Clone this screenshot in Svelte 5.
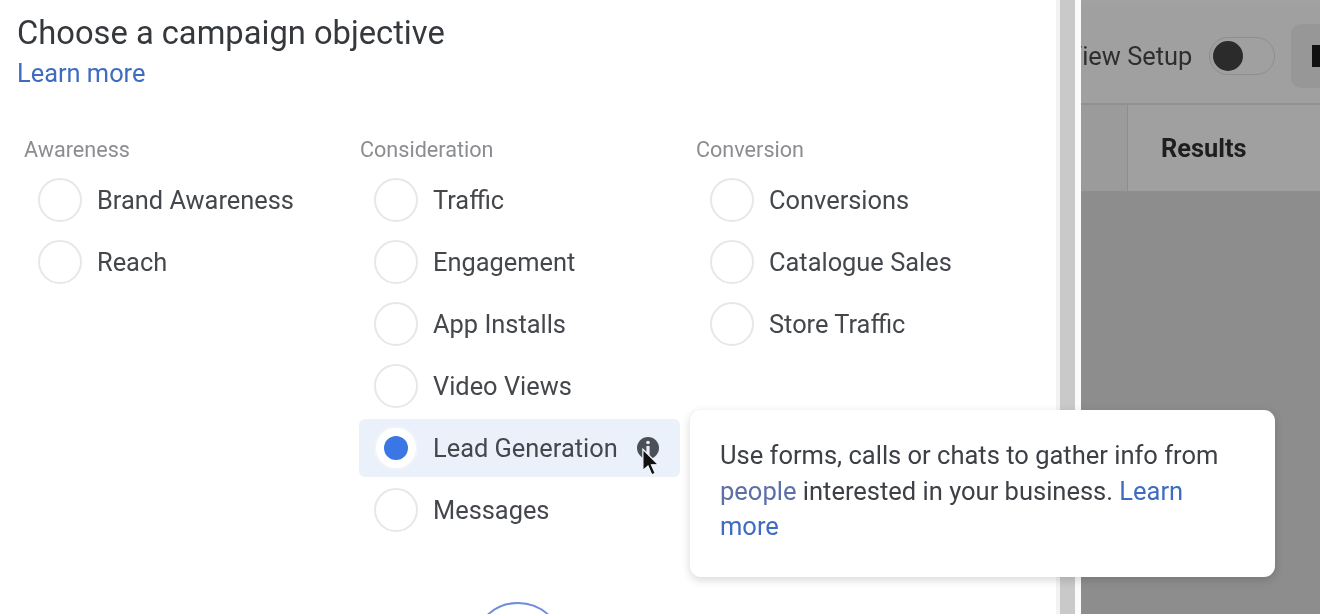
<script lang="ts">
  const columns = [
    { title: 'Awareness', items: ['Brand Awareness', 'Reach'] },
    { title: 'Consideration', items: ['Traffic', 'Engagement', 'App Installs', 'Video Views', 'Lead Generation', 'Messages'] },
    { title: 'Conversion', items: ['Conversions', 'Catalogue Sales', 'Store Traffic'] }
  ];
  const selected = 'Lead Generation';
</script>

<div class="page">
  <section class="modal">
    <h1>Choose a campaign objective</h1>
    <a class="link learn" href="#learn">Learn more</a>

    <div class="columns">
      {#each columns as col}
        <div class="column">
          <div class="col-title">{col.title}</div>
          {#each col.items as item}
            <div class="option" class:active={item === selected}>
              <span class="radio"></span>
              <span class="label">{item}</span>
              {#if item === selected}
                <svg class="info" viewBox="0 0 24 24" width="24" height="24">
                  <circle cx="12" cy="12" r="11" fill="#4b5058" />
                  <circle cx="12" cy="6.5" r="1.8" fill="#e8eef8" />
                  <rect x="10.4" y="10" width="3.2" height="9" fill="#e8eef8" />
                </svg>
              {/if}
            </div>
          {/each}
        </div>
      {/each}
    </div>

    <div class="spinner"></div>
  </section>

  <div class="gutter"></div>

  <section class="backdrop">
    <div class="toolbar">
      <span class="setup">View Setup</span>
      <span class="toggle"><span class="knob"></span></span>
      <span class="tool-btn"><span class="tool-mark"></span></span>
    </div>
    <div class="table-head">
      <div class="cell-a"></div>
      <div class="cell-b">Results</div>
    </div>
  </section>

  <div class="tooltip">
    Use forms, calls or chats to gather info from <a class="link soft" href="#people">people</a> interested in your business. <a class="link" href="#more">Learn more</a>
  </div>

  <svg class="cursor" viewBox="0 0 16 24" width="20" height="30">
    <path d="M1.5 1 L1.5 18 L5.6 14.4 L8.6 21.4 L11.4 20.2 L8.4 13.4 L13.8 13.2 Z" fill="#111" stroke="#f4f6fa" stroke-width="1" />
  </svg>
</div>

<style>
  :global(body) {
    margin: 0;
    background: #fff;
  }

  .page {
    position: relative;
    display: flex;
    width: 1320px;
    height: 614px;
    overflow: hidden;
    font-family: Roboto, 'Liberation Sans', sans-serif;
    color: #3d4045;
    filter: blur(0.4px);
  }

  .modal {
    width: 1056px;
    flex: none;
    box-sizing: border-box;
    padding: 13px 0 0 17px;
    background: #fff;
  }

  h1 {
    margin: 0;
    font-size: 32.7px;
    line-height: 41px;
    font-weight: 400;
    color: #35383c;
  }

  .link {
    color: #3f6cc0;
    text-decoration: none;
  }

  .soft {
    color: #5c6fa8;
  }

  .learn {
    display: block;
    font-size: 25.4px;
    line-height: 38px;
  }

  .columns {
    display: flex;
    margin: 44px 0 0 -1px;
  }

  .column {
    width: 336px;
    flex: none;
  }

  .col-title {
    padding-left: 8px;
    margin-bottom: 7px;
    font-size: 21.6px;
    line-height: 28px;
    color: #8b8d90;
  }

  .option {
    display: flex;
    align-items: center;
    width: 321px;
    height: 58px;
    margin: 0 0 4px 7px;
    box-sizing: border-box;
    padding-left: 15px;
    border-radius: 6px;
  }

  .option.active {
    background: #ebf1fb;
  }

  .radio {
    position: relative;
    width: 40px;
    height: 40px;
    flex: none;
    border: 2px solid #e6e7e9;
    border-radius: 50%;
    background: #fff;
  }

  .active .radio {
    border-color: #f1f4f9;
  }

  .active .radio::after {
    content: '';
    position: absolute;
    inset: 8px;
    border-radius: 50%;
    background: #3a76e4;
  }

  .label {
    margin-left: 15px;
    font-size: 25.4px;
    color: #44474c;
  }

  .info {
    margin-left: 18px;
  }

  .spinner {
    width: 88px;
    height: 88px;
    margin: 59px 0 0 455px;
    border: 2px solid #6f8fdc;
    border-radius: 50%;
  }

  .gutter {
    width: 25px;
    flex: none;
    box-sizing: border-box;
    background: #c9c9c9;
    border-left: 4px solid #f3f3f3;
    border-right: 6px solid #fbfbfb;
  }

  .backdrop {
    flex: 1;
    display: flex;
    flex-direction: column;
    min-width: 0;
    overflow: hidden;
    background: #8d8d8d;
  }

  .toolbar {
    display: flex;
    align-items: center;
    height: 105px;
    box-sizing: border-box;
    padding: 4px 0 0 0;
    border-top: 5px solid #a2a2a2;
    border-bottom: 2px solid #909090;
    background: #a0a0a0;
    white-space: nowrap;
  }

  .setup {
    margin-left: -15px;
    font-size: 25.4px;
    color: #2e2e2e;
  }

  .toggle {
    display: flex;
    align-items: center;
    width: 66px;
    height: 38px;
    margin-left: 17px;
    flex: none;
    box-sizing: border-box;
    padding-left: 3px;
    border: 1px solid #8e8e8e;
    border-radius: 19px;
  }

  .knob {
    width: 30px;
    height: 30px;
    border-radius: 50%;
    background: #2b2b2b;
  }

  .tool-btn {
    display: flex;
    align-items: center;
    width: 60px;
    height: 64px;
    margin-left: 16px;
    flex: none;
    padding-left: 21px;
    border-radius: 10px;
    background: #979797;
  }

  .tool-mark {
    width: 10px;
    height: 22px;
    background: #111;
  }

  .table-head {
    display: flex;
    height: 86px;
    border-bottom: 1px solid #8e8e8e;
    background: #a0a0a0;
  }

  .cell-a {
    width: 46px;
    flex: none;
    border-right: 1px solid #8e8e8e;
    background: #9b9b9b;
  }

  .cell-b {
    padding: 28px 0 0 33px;
    font-size: 25.4px;
    font-weight: 700;
    color: #1e1e1e;
  }

  .tooltip {
    position: absolute;
    left: 690px;
    top: 410px;
    width: 585px;
    height: 167px;
    box-sizing: border-box;
    padding: 28px 30px;
    border-radius: 11px;
    background: #fff;
    box-shadow: 0 3px 10px rgba(0, 0, 0, 0.16);
    font-size: 25.5px;
    line-height: 35.5px;
    color: #3d4045;
  }

  .cursor {
    position: absolute;
    left: 641px;
    top: 448px;
  }
</style>
